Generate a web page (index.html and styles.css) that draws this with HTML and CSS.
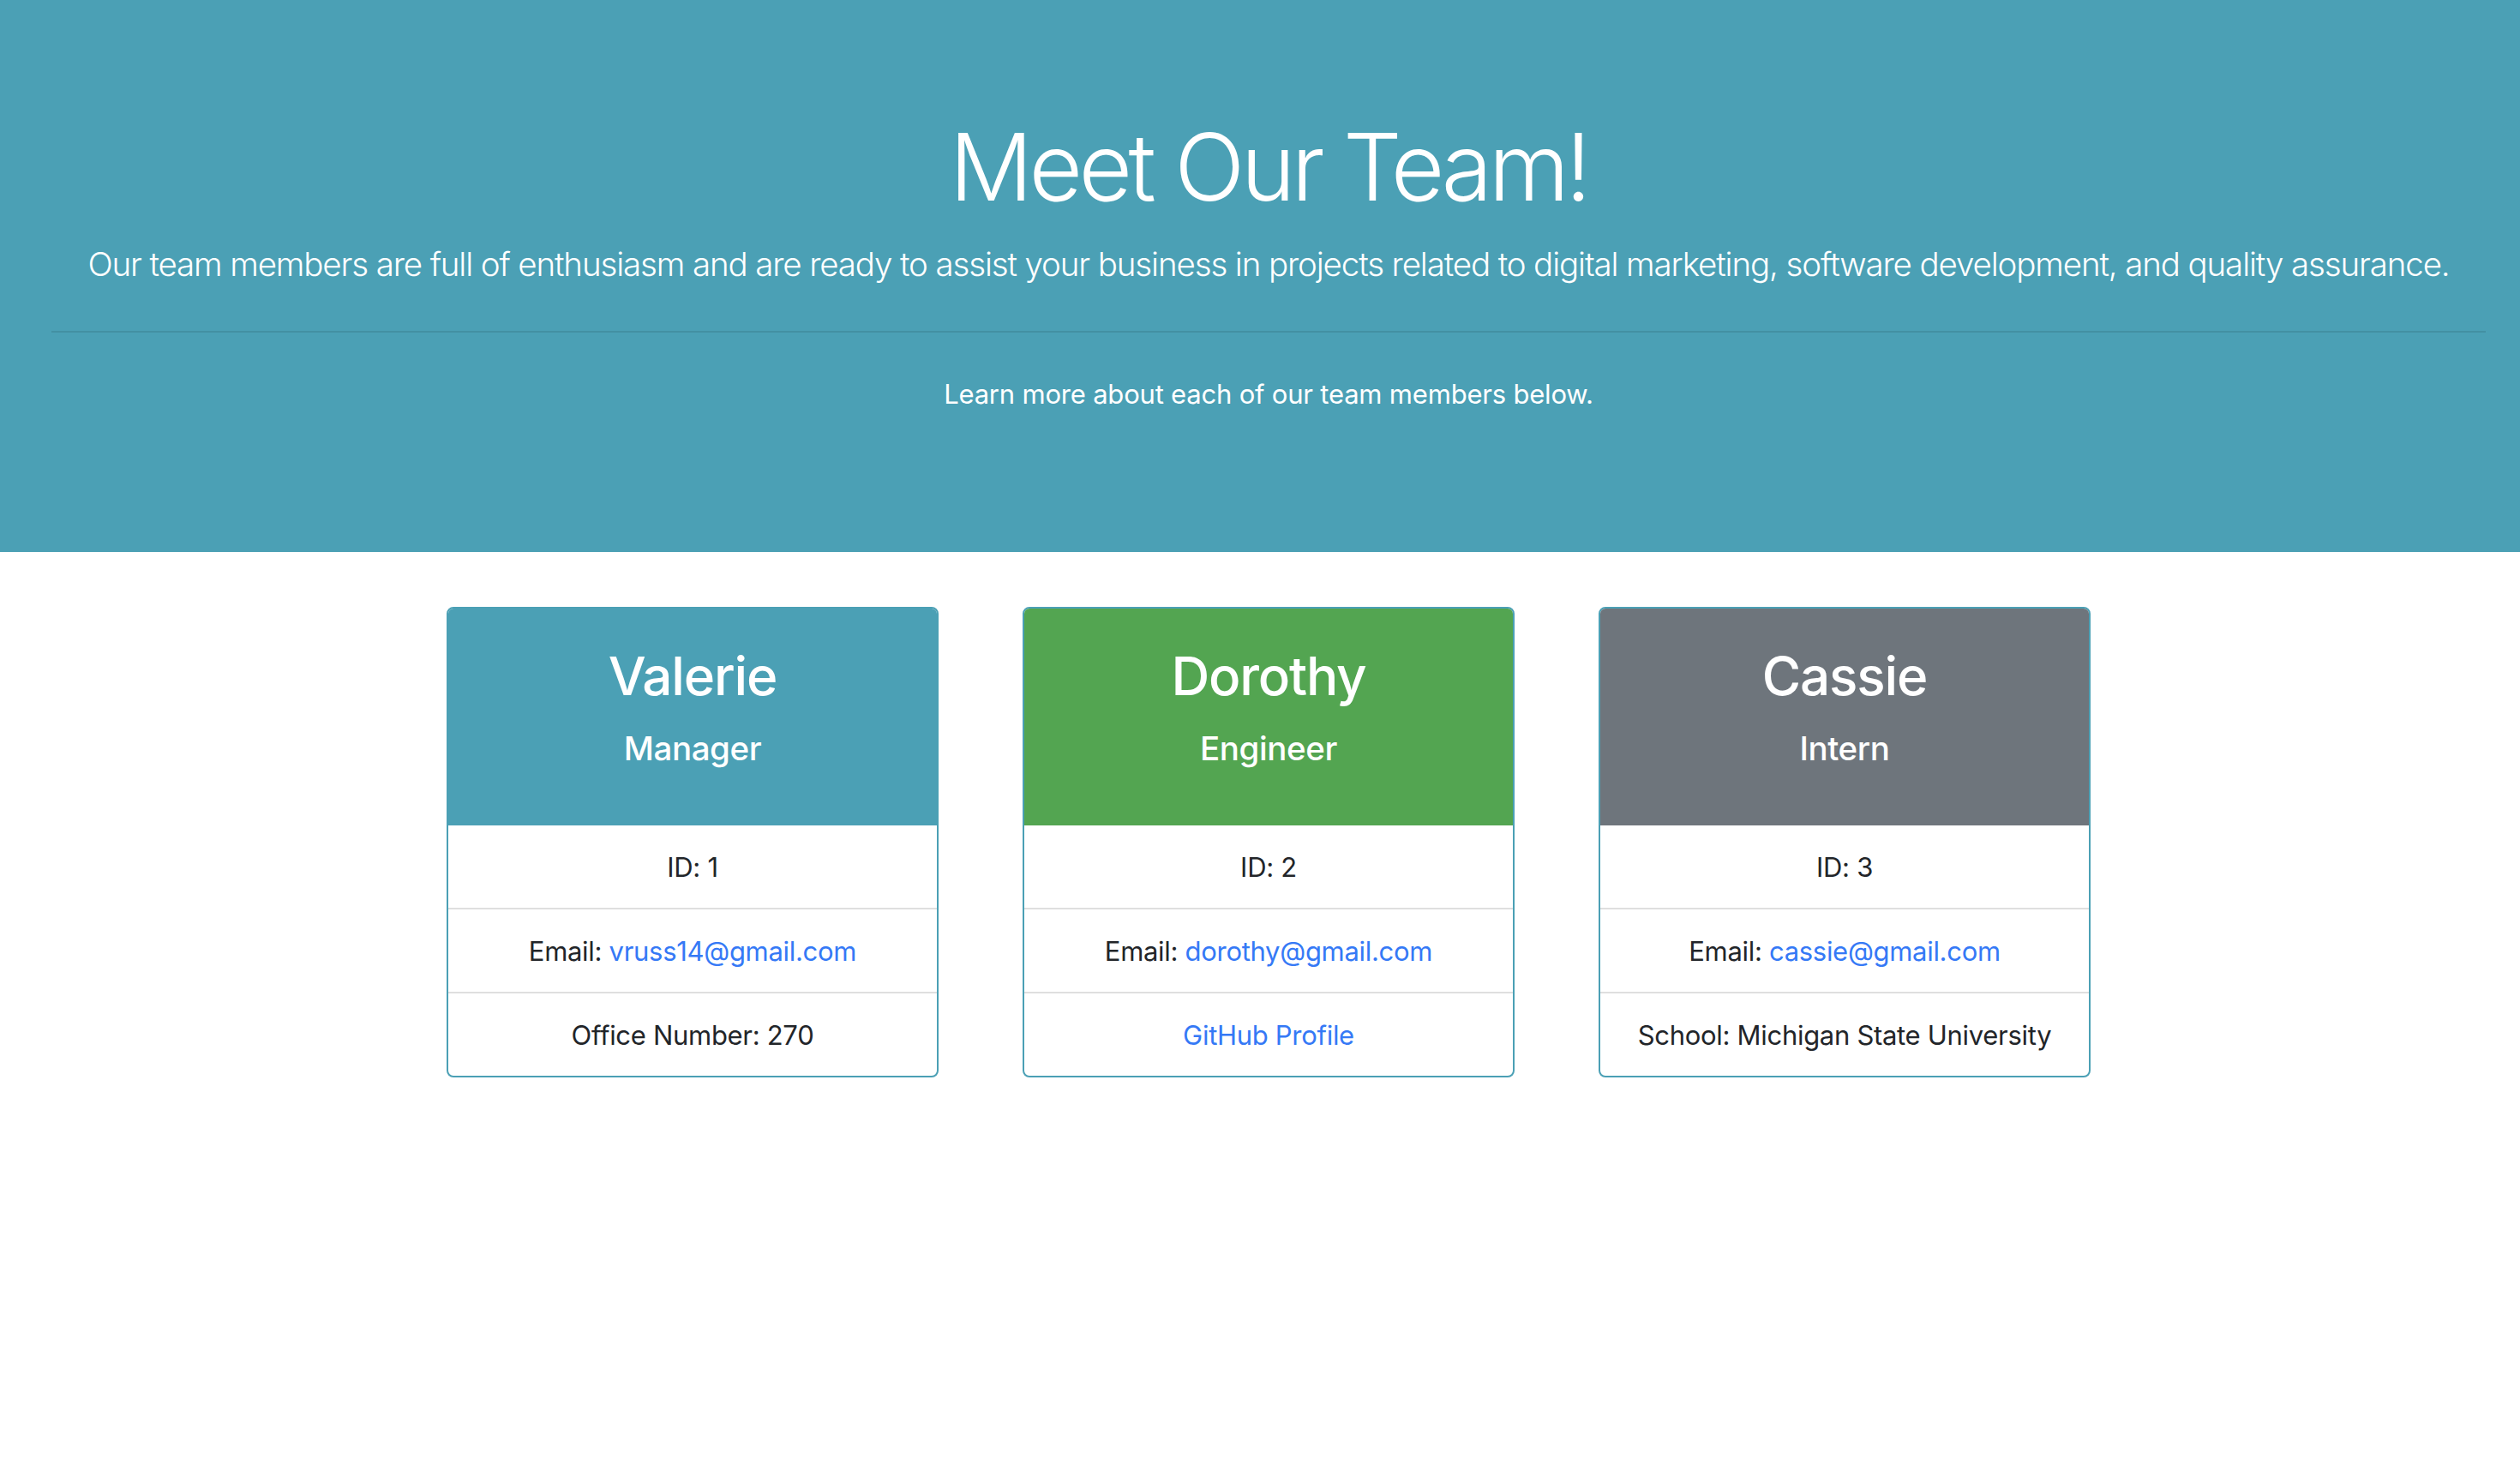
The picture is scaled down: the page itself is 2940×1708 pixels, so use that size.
FILE: index.html
```html
<!DOCTYPE html>
<html lang="en">
<head>
<meta charset="utf-8">
<title>My Team</title>
<link rel="stylesheet" href="styles.css">
</head>
<body>
<header class="jumbotron">
  <div class="container">
    <h1 class="display">Meet Our Team!</h1>
    <p class="lead">Our team members are full of enthusiasm and are ready to assist your business in projects related to digital marketing, software development, and quality assurance.</p>
    <hr class="divider">
    <p class="note">Learn more about each of our team members below.</p>
  </div>
</header>
<main class="container">
  <div class="cards">
    <section class="card">
      <div class="card-header header-info">
        <h2 class="name">Valerie</h2>
        <h5 class="role">Manager</h5>
      </div>
      <ul class="list">
        <li class="item">ID: 1</li>
        <li class="item">Email: <a class="link" href="mailto:vruss14@gmail.com">vruss14@gmail.com</a></li>
        <li class="item">Office Number: 270</li>
      </ul>
    </section>
    <section class="card">
      <div class="card-header header-success">
        <h2 class="name">Dorothy</h2>
        <h5 class="role">Engineer</h5>
      </div>
      <ul class="list">
        <li class="item">ID: 2</li>
        <li class="item">Email: <a class="link" href="mailto:dorothy@gmail.com">dorothy@gmail.com</a></li>
        <li class="item"><a class="link" href="#">GitHub Profile</a></li>
      </ul>
    </section>
    <section class="card">
      <div class="card-header header-secondary">
        <h2 class="name">Cassie</h2>
        <h5 class="role">Intern</h5>
      </div>
      <ul class="list">
        <li class="item">ID: 3</li>
        <li class="item">Email: <a class="link" href="mailto:cassie@gmail.com">cassie@gmail.com</a></li>
        <li class="item">School: Michigan State University</li>
      </ul>
    </section>
  </div>
</main>
</body>
</html>
```
FILE: styles.css
```css
* {
  box-sizing: border-box;
}

html, body {
  margin: 0;
  padding: 0;
  background: #ffffff;
}

body {
  font-family: "Inter", "Noto Sans", "Liberation Sans", sans-serif;
  font-size: 32px;
  line-height: 1.5;
  color: #222529;
}

.container {
  padding: 0 40px 0 60px;
}

.jumbotron {
  background: #4ba0b5;
  color: #ffffff;
  padding: 128px 0;
  margin-bottom: 64px;
  text-align: center;
}

.display {
  font-size: 108px;
  font-weight: 300;
  line-height: 134px;
  letter-spacing: -4.5px;
  margin: 0 0 16px;
}

.lead {
  font-size: 38.5px;
  font-weight: 300;
  line-height: 60px;
  letter-spacing: -1.13px;
  margin: 0 0 32px;
  white-space: nowrap;
}

.divider {
  border: 0;
  border-top: 2px solid #4390a3;
  margin: 48px 0;
  height: 0;
}

.note {
  font-size: 31px;
  line-height: 48px;
  letter-spacing: -0.2px;
  margin: 0 0 32px;
}

.cards {
  display: flex;
  justify-content: center;
  gap: 98px;
}

.card {
  width: 574px;
  border: 2px solid #4ba0b5;
  border-radius: 8px;
  overflow: hidden;
  text-align: center;
  background: #ffffff;
}

.card-header {
  color: #ffffff;
  padding: 40px 24px 65px;
  height: 253px;
}

.header-info {
  background: #4ba0b5;
}

.header-success {
  background: #53a551;
}

.header-secondary {
  background: #6e757c;
}

.name {
  font-size: 62px;
  font-weight: 500;
  line-height: 77px;
  letter-spacing: -1.2px;
  margin: 0 0 22px;
}

.role {
  font-size: 38.5px;
  font-weight: 500;
  line-height: 48px;
  letter-spacing: -0.4px;
  margin: 0;
}

.list {
  list-style: none;
  margin: 0;
  padding: 0;
}

.item {
  font-size: 31px;
  line-height: 48px;
  letter-spacing: -0.3px;
  padding: 25px 20px 23px;
  border-bottom: 2px solid #dfdfdf;
  white-space: nowrap;
}

.item:last-child {
  border-bottom: 0;
}

.link {
  color: #3579f6;
  text-decoration: none;
}
```
